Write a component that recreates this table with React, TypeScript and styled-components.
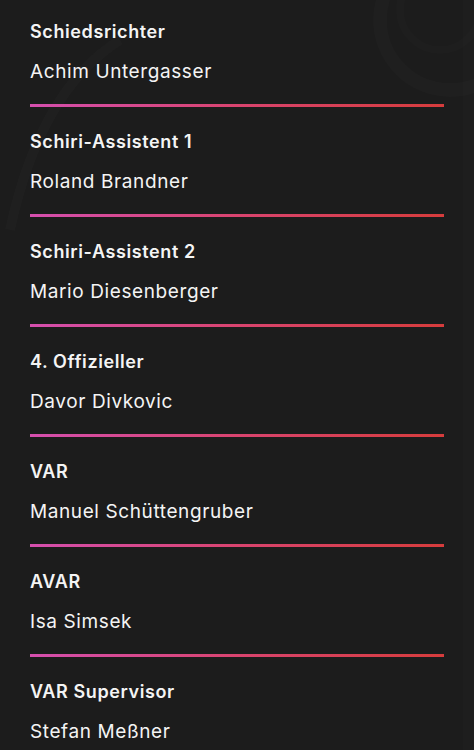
import React from "react";
import styled, { createGlobalStyle } from "styled-components";

const GlobalStyle = createGlobalStyle`
  html, body {
    margin: 0;
    padding: 0;
    background: #1c1c1c;
  }
`

const Page = styled.div`
  position: relative;
  min-height: 750px;
  overflow: hidden;
  background: #1c1c1c;
  font-family: "Inter", "Liberation Sans", sans-serif;
  color: #f4f4f4;
`

const Decor = styled.svg`
  position: absolute;
  inset: 0;
  width: 100%;
  height: 100%;
  pointer-events: none;
`

const List = styled.div`
  position: relative;
  padding: 19px 30px 0 30px;
  display: flex;
  flex-direction: column;
`

const Entry = styled.div`
  display: flex;
  flex-direction: column;
`

const Role = styled.p`
  margin: 0;
  font-size: 18px;
  line-height: 26px;
  font-weight: 600;
  letter-spacing: 0.6px;
`

const Name = styled.p`
  margin: 15px 0 0 0;
  font-size: 19px;
  line-height: 24px;
  font-weight: 400;
  letter-spacing: 0.6px;
`

const Divider = styled.div`
  margin: 20px 0 22px 0;
  height: 3px;
  background: linear-gradient(90deg, #d54fae 0%, #d9446f 50%, #d63c3c 100%);
`

const officials = [
    {role: 'Schiedsrichter', name: 'Achim Untergasser'},
    {role: 'Schiri-Assistent 1', name: 'Roland Brandner'},
    {role: 'Schiri-Assistent 2', name: 'Mario Diesenberger'},
    {role: '4. Offizieller', name: 'Davor Divkovic'},
    {role: 'VAR', name: 'Manuel Schüttengruber'},
    {role: 'AVAR', name: 'Isa Simsek'},
    {role: 'VAR Supervisor', name: 'Stefan Meßner'},
]

const App: React.FC = () => {
    return (
        <Page>
            <GlobalStyle/>
            <Decor viewBox="0 0 474 750" preserveAspectRatio="none">
                <circle cx="450" cy="20" r="70" fill="none" stroke="rgba(255,255,255,0.015)" strokeWidth="14"/>
                <circle cx="440" cy="10" r="40" fill="none" stroke="rgba(255,255,255,0.012)" strokeWidth="8"/>
                <path d="M 10 230 Q 40 90 120 40" fill="none" stroke="rgba(255,255,255,0.015)" strokeWidth="10"/>
                <rect x="463" y="0" width="11" height="750" fill="rgba(255,255,255,0.012)"/>
            </Decor>
            <List>
                {officials.map((o, i) => (
                    <Entry key={o.role}>
                        <Role>{o.role}</Role>
                        <Name>{o.name}</Name>
                        {i < officials.length - 1 && <Divider/>}
                    </Entry>
                ))}
            </List>
        </Page>
    )
}

export default App
